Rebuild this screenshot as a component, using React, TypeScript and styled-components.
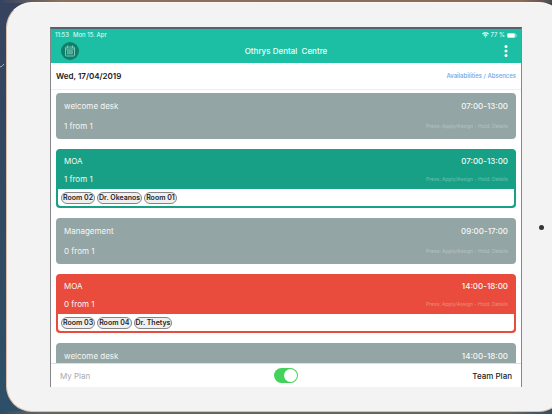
import React, { useState } from 'react';
import styled, { createGlobalStyle } from 'styled-components';

const GlobalStyle = createGlobalStyle`
  * { box-sizing: border-box; }
  body {
    margin: 0;
    background: #fff;
    font-family: Inter, "Liberation Sans", sans-serif;
    font-size: 8px;
    line-height: 12px;
  }
  button { font: inherit; border: 0; padding: 0; background: none; cursor: pointer; }
`;

const Backdrop = styled.main`
  position: relative;
  display: flex;
  height: 100vh;
  margin-right: 5px;
  padding: 2px 0 2px 6px;
  overflow: hidden;
  background:
    linear-gradient(90deg, #344360 0, #8a7060 60px, #8a6c58 calc(100% - 30px), #4b4b50 100%) top / 100% 3px no-repeat,
    linear-gradient(90deg, #304c66 0, #65645f 40px, #65645f calc(100% - 40px), #2e506c 100%) bottom / 100% 3px no-repeat,
    linear-gradient(#36435f, #2c5068);
`;

const Swoosh = styled.svg`
  position: absolute;
  left: 0;
  top: 62px;
`;

const Tablet = styled.div`
  display: flex;
  flex: 1;
  min-width: 0;
  margin-right: -13px;
  padding: 24px 0 24px 43px;
  border: 1px solid #ddc0ab;
  border-top-color: #fdf8f3;
  border-radius: 26px;
  background: #f3f3f3;
`;

const Screen = styled.div`
  display: flex;
  flex: 1;
  flex-direction: column;
  min-width: 0;
  border: 1px solid #85858a;
  border-top: 2px solid #5d5e6c;
  border-bottom: 0;
  background: #fff;
`;

const Bezel = styled.div`
  display: flex;
  align-items: center;
  justify-content: center;
  width: 42px;
  padding: 40px 4px 0 0;
`;

const Camera = styled.span`
  width: 5px;
  height: 5px;
  border-radius: 50%;
  background: #333438;
`;

const Header = styled.header`
  padding: 0 4px;
  background: #1dbfa4;
  color: #e9fffa;
`;

const StatusBar = styled.div`
  display: flex;
  align-items: center;
  justify-content: space-between;
  height: 12px;
  font-size: 6px;
  line-height: 12px;
`;

const StatusGroup = styled.div<{ $gap: number }>`
  display: flex;
  align-items: center;
  gap: ${({ $gap }) => $gap}px;
`;

const TitleBar = styled.div`
  display: grid;
  grid-template-columns: 28px 1fr 28px;
  align-items: center;
  height: 22px;
  padding-bottom: 2px;
`;

const Title = styled.h1`
  margin: 0;
  font-size: 8px;
  font-weight: 500;
  line-height: 12px;
  text-align: center;
  white-space: pre;
`;

const CalendarButton = styled.button`
  display: flex;
  align-items: center;
  justify-content: center;
  width: 18px;
  height: 18px;
  margin-left: 6px;
  border-radius: 50%;
  background: #107f69;
`;

const MenuButton = styled.button`
  display: flex;
  justify-content: center;
  width: 12px;
  height: 14px;
  justify-self: end;
  margin-right: 5px;
`;

const DateRow = styled.div`
  display: flex;
  align-items: center;
  justify-content: space-between;
  height: 27px;
  padding: 0 5px;
  border-bottom: 1px solid #eeeeee;
`;

const DateText = styled.strong`
  color: #202022;
  font-weight: 600;
`;

const AbsenceLink = styled.a`
  color: #64a9ea;
  font-size: 6px;
  font-weight: 500;
  text-decoration: none;
`;

const ShiftList = styled.div`
  display: flex;
  flex: 1;
  flex-direction: column;
  gap: 10px;
  min-height: 0;
  padding: 3px 5px 0;
  overflow: hidden;
`;

const tones = { grey: '#93a5a4', green: '#17a085', red: '#e94b3c' };
type Tone = keyof typeof tones;

const Card = styled.article<{ $tone: Tone }>`
  flex-shrink: 0;
  padding: 0 2px 2px;
  border-radius: 4px;
  background: ${({ $tone }) => tones[$tone]};
  color: #f5f8f7;
`;

const CardBody = styled.div<{ $compact: boolean }>`
  display: grid;
  grid-template-columns: 1fr auto;
  align-content: start;
  row-gap: ${({ $compact }) => ($compact ? 6 : 8)}px;
  height: ${({ $compact }) => ($compact ? 40 : 44)}px;
  padding: ${({ $compact }) => ($compact ? 6 : 7)}px 6px 0;
`;

const Hours = styled.span`
  text-align: right;
  font-weight: 500;
`;

const Hint = styled.small`
  font-size: 5px;
  line-height: 12px;
  opacity: 0.35;
`;

const Tags = styled.ul`
  display: flex;
  align-items: center;
  gap: 2px;
  height: 17px;
  margin: 0;
  padding: 0 3px;
  border-radius: 0 0 3px 3px;
  background: #fff;
  list-style: none;
`;

const Tag = styled.li`
  padding: 0 1px;
  border: 1px solid #858585;
  border-radius: 6px;
  background: #f0f0f0;
  color: #252525;
  font-size: 7px;
  font-weight: 600;
  line-height: 10px;
`;

const Footer = styled.footer`
  display: grid;
  grid-template-columns: 1fr auto 1fr;
  align-items: center;
  height: 24px;
  padding: 0 9px;
  border-top: 1px solid #dedede;
`;

const PlanLabel = styled.span<{ $active: boolean }>`
  color: ${({ $active }) => ($active ? '#242426' : '#a9a9ab')};
  font-weight: ${({ $active }) => ($active ? 500 : 400)};
  &:last-child { text-align: right; }
`;

const Switch = styled.input`
  appearance: none;
  display: flex;
  width: 24px;
  height: 15px;
  margin: 0;
  padding: 1px;
  border-radius: 8px;
  background: #c9c9cc;
  cursor: pointer;
  &::before {
    content: '';
    width: 13px;
    height: 13px;
    border-radius: 50%;
    background: #fff;
  }
  &:checked { justify-content: flex-end; background: #43d35c; }
`;

interface Shift { name: string; filled?: string; hours: string; tone: Tone; tags: string[] }

const shifts: Shift[] = [
  { name: 'welcome desk', filled: '1 from 1', hours: '07:00-13:00', tone: 'grey', tags: [] },
  { name: 'MOA', filled: '1 from 1', hours: '07:00-13:00', tone: 'green', tags: ['Room 02', 'Dr. Okeanos', 'Room 01'] },
  { name: 'Management', filled: '0 from 1', hours: '09:00-17:00', tone: 'grey', tags: [] },
  { name: 'MOA', filled: '0 from 1', hours: '14:00-18:00', tone: 'red', tags: ['Room 03', 'Room 04', 'Dr. Thetys'] },
  { name: 'welcome desk', hours: '14:00-18:00', tone: 'grey', tags: [] },
];

function ShiftCard({ shift }: { shift: Shift }) {
  const tagged = shift.tags.length > 0;
  return (
    <Card $tone={shift.tone}>
      <CardBody $compact={tagged}>
        <span>{shift.name}</span>
        <Hours>{shift.hours}</Hours>
        {shift.filled && (
          <>
            <span>{shift.filled}</span>
            <Hint>Press: Apply/Assign - Hold: Details</Hint>
          </>
        )}
      </CardBody>
      {tagged && <Tags>{shift.tags.map((tag) => <Tag key={tag}>{tag}</Tag>)}</Tags>}
    </Card>
  );
}

export default function App() {
  const [team, setTeam] = useState(true);
  return (
    <>
      <GlobalStyle />
      <Backdrop>
        <Swoosh width="5" height="8" viewBox="0 0 5 8" fill="none" stroke="#a3adbd" aria-hidden="true">
          <path d="M0 5 Q2 5 4 2" />
        </Swoosh>
        <Tablet>
          <Screen>
            <Header>
              <StatusBar>
                <StatusGroup $gap={4}><span>11:53</span><span>Mon 15. Apr</span></StatusGroup>
                <StatusGroup $gap={2}>
                  <svg width="7" height="6" viewBox="0 0 14 11" fill="currentColor" aria-hidden="true">
                    <path d="M7 0C4.300 0 1.900 1 0 2.700L1.800 4.600A8 8 0 0 1 12.200 4.600L14 2.700A10.500 10.500 0 0 0 7 0ZM7 4.200A6.500 6.500 0 0 0 2.700 5.800L4.500 7.600A4 4 0 0 1 9.500 7.600L11.300 5.800A6.500 6.500 0 0 0 7 4.200ZM7 8L5.200 9L7 11L8.800 9Z" />
                  </svg>
                  <span>77 %</span>
                  <svg width="10" height="5" viewBox="0 0 20 10" aria-hidden="true">
                    <rect x="0.500" y="0.500" width="17" height="9" rx="2" fill="#fff" fillOpacity="0.500" />
                    <rect x="1" y="1" width="14" height="8" rx="1" fill="#fff" />
                    <rect x="18.500" y="3" width="1.500" height="4" rx="0.500" fill="#fff" fillOpacity="0.600" />
                  </svg>
                </StatusGroup>
              </StatusBar>
              <TitleBar>
                <CalendarButton aria-label="Calendar">
                  <svg width="12" height="12" viewBox="0 0 12 12" fill="none" stroke="#79c7b6" aria-hidden="true">
                    <rect x="1.500" y="2" width="9" height="9" rx="1" />
                    <path d="M3.500 0.500V3M8.500 0.500V3M1.500 4H10.500" />
                    <rect x="3.500" y="5.500" width="5" height="3.500" fill="#79c7b6" fillOpacity="0.600" strokeWidth="0.500" />
                  </svg>
                </CalendarButton>
                <Title>{'Othrys Dental  Centre'}</Title>
                <MenuButton aria-label="More options">
                  <svg width="4" height="14" viewBox="0 0 4 14" fill="#fff" aria-hidden="true">
                    <circle cx="2" cy="2.500" r="1.500" /><circle cx="2" cy="7" r="1.500" /><circle cx="2" cy="11.500" r="1.500" />
                  </svg>
                </MenuButton>
              </TitleBar>
            </Header>
            <DateRow>
              <DateText>Wed, 17/04/2019</DateText>
              <AbsenceLink href="#absences">Availabilities / Absences</AbsenceLink>
            </DateRow>
            <ShiftList>
              {shifts.map((shift, index) => <ShiftCard key={index} shift={shift} />)}
            </ShiftList>
            <Footer>
              <PlanLabel $active={!team}>My Plan</PlanLabel>
              <Switch type="checkbox" aria-label="Team Plan" checked={team} onChange={(e) => setTeam(e.target.checked)} />
              <PlanLabel $active={team}>Team Plan</PlanLabel>
            </Footer>
          </Screen>
          <Bezel><Camera /></Bezel>
        </Tablet>
      </Backdrop>
    </>
  );
}
